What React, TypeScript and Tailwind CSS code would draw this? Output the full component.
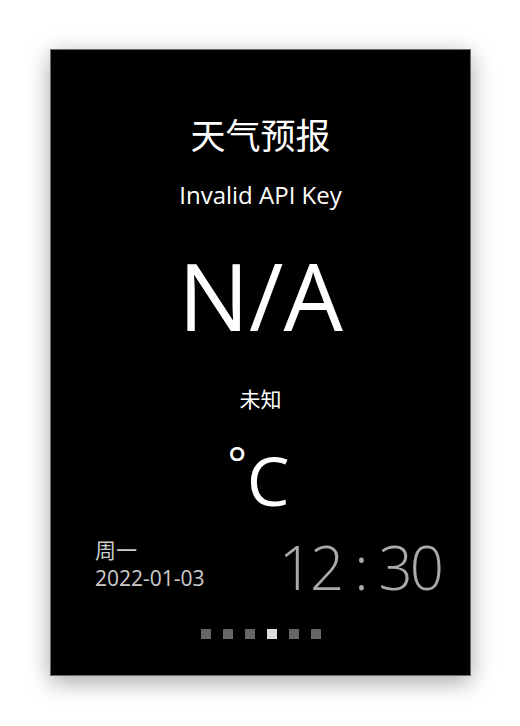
import React from "react";

const font = { fontFamily: '"Open Sans", "Noto Sans CJK SC", sans-serif' };

export default function App() {
  const dots = [0, 1, 2, 3, 4, 5];
  return (
    <div className="w-[520px] h-[726px] bg-white pt-[49px] pl-[50px]" style={font}>
      <div className="w-[421px] h-[627px] bg-black border border-[#6b6b6b] shadow-[0_6px_22px_rgba(0,0,0,0.35)] flex flex-col items-center text-white">
        <div className="mt-[66px] text-[35px] leading-[40px]">天气预报</div>
        <div className="mt-[24px] text-[24px] leading-[30px]">Invalid API Key</div>
        <div className="mt-[35px] text-[94px] leading-[100px]">N/A</div>
        <div className="mt-[40px] text-[21px] leading-[28px]">未知</div>
        <div className="mt-[29px] flex items-start pr-[4px]">
          <span className="text-[45px] leading-[42px]">°</span>
          <span className="text-[68px] leading-[76px]">C</span>
        </div>
        <div className="mt-[16px] w-full flex justify-between items-start pl-[44px] pr-[32px]">
          <div className="flex flex-col text-[#cccccc] pt-[2px]">
            <div className="text-[21px] leading-[28px]">周一</div>
            <div className="text-[21px] leading-[28px]">2022-01-03</div>
          </div>
          <div className="flex items-baseline gap-[10px] text-[60px] leading-[62px] font-light text-[#aaaaaa] pt-[2px]">
            <span className="tracking-[-3px] mr-[3px]">12</span>
            <span>:</span>
            <span className="tracking-[-3px] mr-[-3px]">30</span>
          </div>
        </div>
        <div className="mt-[31px] flex gap-[12px]">
          {dots.map((d) => (
            <div
              key={d}
              className={d === 3 ? "w-[10px] h-[10px] bg-[#dcdcdc]" : "w-[10px] h-[10px] bg-[#666666]"}
            />
          ))}
        </div>
      </div>
    </div>
  );
}
